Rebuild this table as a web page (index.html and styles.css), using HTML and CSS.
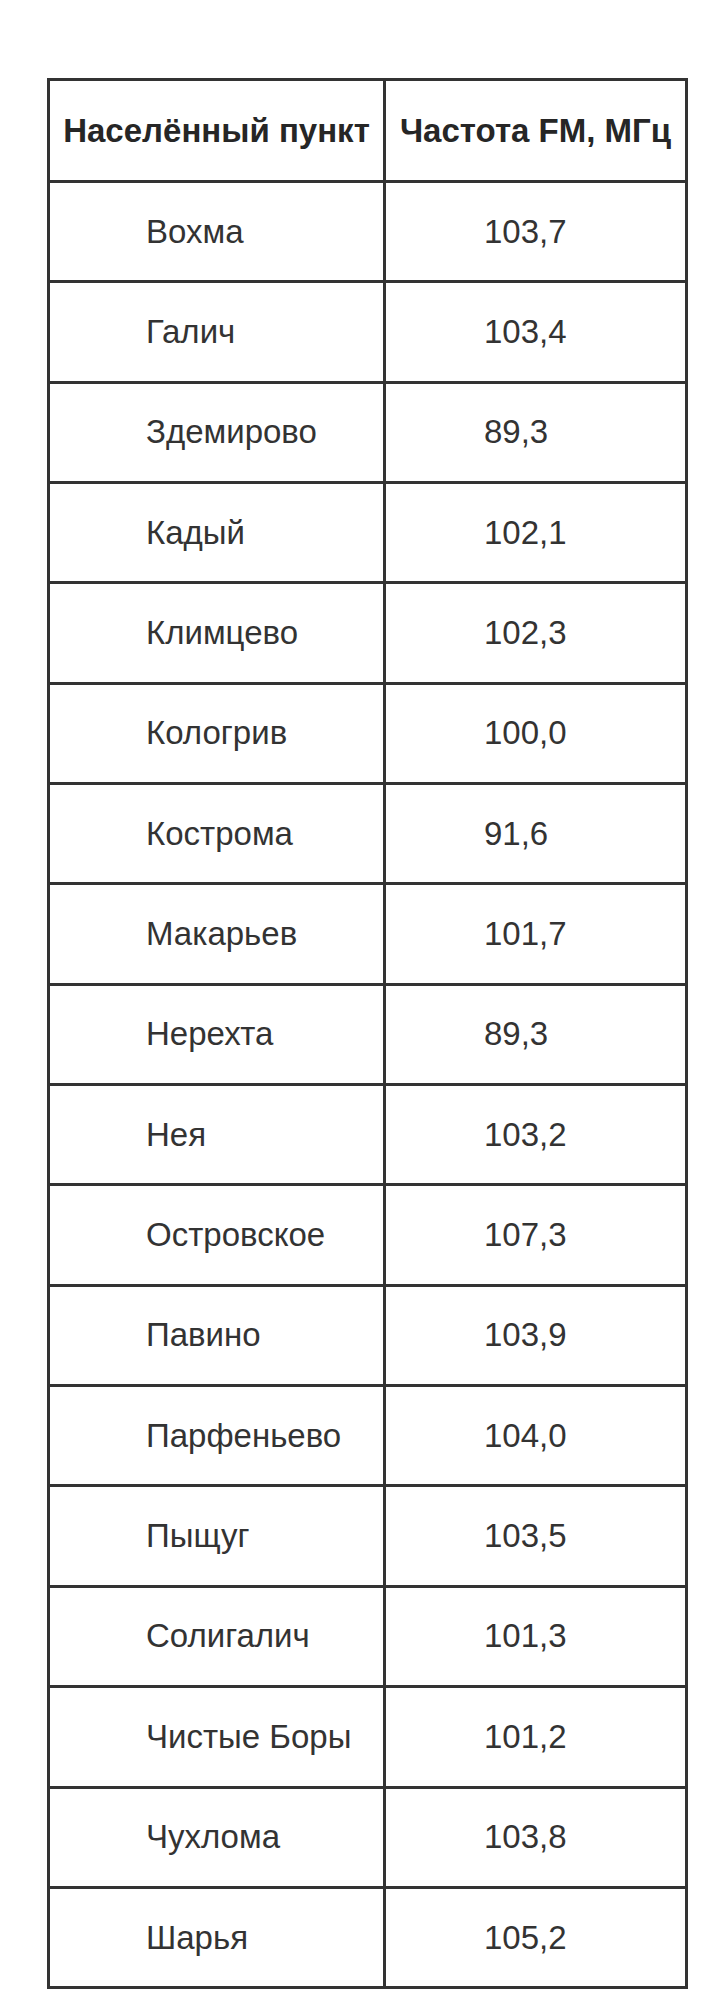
FILE: index.html
```html
<!DOCTYPE html>
<html lang="ru">
<head>
<meta charset="utf-8">
<title>Частоты FM</title>
<link rel="stylesheet" href="styles.css">
</head>
<body>
<div class="page">
<table class="freq">
<thead>
<tr><th class="col-city">Населённый пункт</th><th class="col-freq">Частота FM, МГц</th></tr>
</thead>
<tbody>
<tr><td class="city">Вохма</td><td class="num">103,7</td></tr>
<tr><td class="city">Галич</td><td class="num">103,4</td></tr>
<tr><td class="city">Здемирово</td><td class="num">89,3</td></tr>
<tr><td class="city">Кадый</td><td class="num">102,1</td></tr>
<tr><td class="city">Климцево</td><td class="num">102,3</td></tr>
<tr><td class="city">Кологрив</td><td class="num">100,0</td></tr>
<tr><td class="city">Кострома</td><td class="num">91,6</td></tr>
<tr><td class="city">Макарьев</td><td class="num">101,7</td></tr>
<tr><td class="city">Нерехта</td><td class="num">89,3</td></tr>
<tr><td class="city">Нея</td><td class="num">103,2</td></tr>
<tr><td class="city">Островское</td><td class="num">107,3</td></tr>
<tr><td class="city">Павино</td><td class="num">103,9</td></tr>
<tr><td class="city">Парфеньево</td><td class="num">104,0</td></tr>
<tr><td class="city">Пыщуг</td><td class="num">103,5</td></tr>
<tr><td class="city">Солигалич</td><td class="num">101,3</td></tr>
<tr><td class="city">Чистые Боры</td><td class="num">101,2</td></tr>
<tr><td class="city">Чухлома</td><td class="num">103,8</td></tr>
<tr><td class="city">Шарья</td><td class="num">105,2</td></tr>
</tbody>
</table>
</div>
</body>
</html>
```
FILE: styles.css
```css
html, body {
  margin: 0;
  padding: 0;
  background: #ffffff;
}
.page {
  padding: 78px 0 0 47px;
}
.freq {
  border-collapse: collapse;
  font-family: "Liberation Sans", Arial, sans-serif;
  font-size: 33px;
  color: #333333;
  table-layout: fixed;
  width: 632px;
}
.freq th,
.freq td {
  border: 3px solid #333333;
  height: 97.35px;
  padding: 0;
  vertical-align: middle;
}
.freq th {
  font-weight: bold;
  color: #262626;
  text-align: center;
  height: 99px;
  white-space: nowrap;
}
.col-city { width: 333px; }
.col-freq { width: 299px; }
.freq td.city {
  text-align: left;
  padding-left: 96px;
}
.freq td.num {
  text-align: left;
  padding-left: 98px;
}
```
